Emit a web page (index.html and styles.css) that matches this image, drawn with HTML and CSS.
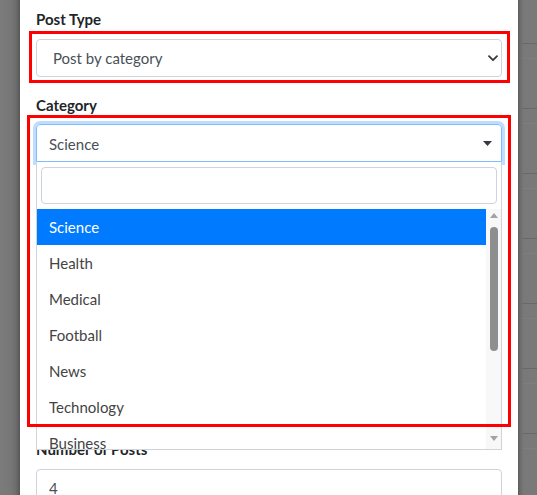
FILE: index.html
```html
<!DOCTYPE html>
<html>
<head>
<meta charset="utf-8">
<link rel="stylesheet" href="styles.css">
</head>
<body>
<div class="screen">
  <div class="side side-left"></div>
  <div class="modal">
    <div class="group group-type">
      <div class="label">Post Type</div>
      <div class="select">
        <span>Post by category</span>
        <svg class="chev" width="10" height="7" viewBox="0 0 10 7"><path d="M1 1.2 L5 5.2 L9 1.2" fill="none" stroke="#343a40" stroke-width="1.8" stroke-linecap="round" stroke-linejoin="round"/></svg>
      </div>
    </div>
    <div class="group group-cat">
      <div class="label">Category</div>
      <div class="s2-selection">
        <span>Science</span>
        <svg class="tri" width="9" height="5" viewBox="0 0 9 5"><path d="M0 0 H9 L4.5 5 Z" fill="#343a40"/></svg>
      </div>
    </div>
    <div class="group group-num">
      <div class="label">Number of Posts</div>
      <div class="input">4</div>
    </div>

    <div class="s2-dropdown">
      <div class="s2-search"><div class="s2-search-field"></div></div>
      <div class="s2-results">
        <ul class="s2-list">
          <li class="opt active">Science</li>
          <li class="opt">Health</li>
          <li class="opt">Medical</li>
          <li class="opt">Football</li>
          <li class="opt">News</li>
          <li class="opt">Technology</li>
          <li class="opt">Business</li>
        </ul>
        <div class="scrollbar">
          <svg class="arrow-up" width="8" height="5" viewBox="0 0 8 5"><path d="M0 5 H8 L4 0 Z" fill="#a3a3a3"/></svg>
          <div class="thumb"></div>
          <div class="spacer"></div>
          <svg class="arrow-down" width="8" height="5" viewBox="0 0 8 5"><path d="M0 0 H8 L4 5 Z" fill="#a3a3a3"/></svg>
        </div>
      </div>
    </div>

    <div class="mark mark-type"></div>
    <div class="mark mark-cat"></div>
  </div>
  <div class="side side-right"></div>
</div>
</body>
</html>
```
FILE: styles.css
```css
html, body {
  margin: 0;
  padding: 0;
  height: 495px;
  overflow: hidden;
}
body {
  font-family: Lato, "Liberation Sans", sans-serif;
  background: #777;
}
.screen {
  display: flex;
  height: 495px;
}
.side-left {
  width: 20px;
  background: linear-gradient(to right, #7b7b7b 0, #777 55%, #6c6c6c 80%, #575757 100%);
}
.side-right {
  flex: 1;
  background-image:
    linear-gradient(to right, #5c5c5c 0, #707070 3px, rgba(0,0,0,0) 6px),
    repeating-linear-gradient(to bottom, rgba(0,0,0,0) 0, rgba(0,0,0,0) 43px, #696969 43px, #696969 44px, rgba(0,0,0,0) 44px, rgba(0,0,0,0) 58px, #7e7e7e 58px, #7e7e7e 59px, rgba(0,0,0,0) 59px, rgba(0,0,0,0) 65px);
  background-color: #797979;
}
.modal {
  width: 498px;
  box-sizing: border-box;
  background: #fff;
  padding: 8px 16px 0;
  position: relative;
  overflow: hidden;
}
.label {
  font-weight: 700;
  font-size: 15px;
  line-height: 22px;
  color: #212529;
  margin-bottom: 9px;
}
.group-cat .label { margin-bottom: 8px; }
.group-type { margin-bottom: 17px; }
.group-cat { margin-bottom: 276px; }

.select {
  height: 38px;
  box-sizing: border-box;
  border: 1px solid #ced4da;
  border-radius: 4px;
  display: flex;
  align-items: center;
  justify-content: space-between;
  padding: 0 3px 0 16px;
  font-size: 15px;
  color: #495057;
}
.s2-selection {
  height: 38px;
  box-sizing: border-box;
  border: 1px solid #80bdff;
  border-radius: 4px 4px 0 0;
  box-shadow: 0 0 0 3px rgba(0, 123, 255, 0.25);
  display: flex;
  align-items: center;
  justify-content: space-between;
  padding: 0 9px 0 12px;
  font-size: 15px;
  color: #495057;
}
.s2-selection span { position: relative; top: 1px; }
.input {
  height: 38px;
  box-sizing: border-box;
  border: 1px solid #ced4da;
  border-radius: 4px;
  padding: 0 12px;
  display: flex;
  align-items: center;
  font-size: 15px;
  color: #495057;
}

.s2-dropdown {
  position: absolute;
  left: 16px;
  top: 162px;
  width: 466px;
  box-sizing: border-box;
  background: #fff;
  border: 1px solid #ced4da;
  border-top: none;
  z-index: 2;
}
.s2-search {
  padding: 5px 4px 5px;
}
.s2-search-field {
  height: 37px;
  box-sizing: border-box;
  border: 1px solid #ced4da;
  border-radius: 4px;
}
.s2-results {
  display: flex;
  height: 240px;
  overflow: hidden;
}
.s2-list {
  list-style: none;
  margin: 0;
  padding: 0;
  flex: 1;
}
.opt {
  height: 36px;
  display: flex;
  align-items: center;
  padding: 0 12px;
  font-size: 15px;
  color: #444;
}
.opt.active {
  background: #007bff;
  color: #fff;
}
.scrollbar {
  width: 15px;
  background: #f8f8f8;
  display: flex;
  flex-direction: column;
  align-items: center;
  padding: 3px 0 5px;
  box-sizing: border-box;
}
.arrow-up { margin-left: 1px; margin-top: 1px; }
.thumb {
  width: 8px;
  height: 124px;
  margin-top: 9px;
  margin-left: 1px;
  background: #8e8e8e;
  border-radius: 4px;
}
.spacer { flex: 1; }
.arrow-down { margin-left: 1px; margin-bottom: 3px; }

.mark {
  position: absolute;
  border: 3px solid #ff0000;
  box-sizing: border-box;
  z-index: 3;
  pointer-events: none;
}
.mark-type {
  left: 9px;
  top: 31px;
  width: 481px;
  height: 52px;
}
.mark-cat {
  left: 7px;
  top: 115px;
  width: 484px;
  height: 312px;
}
```
